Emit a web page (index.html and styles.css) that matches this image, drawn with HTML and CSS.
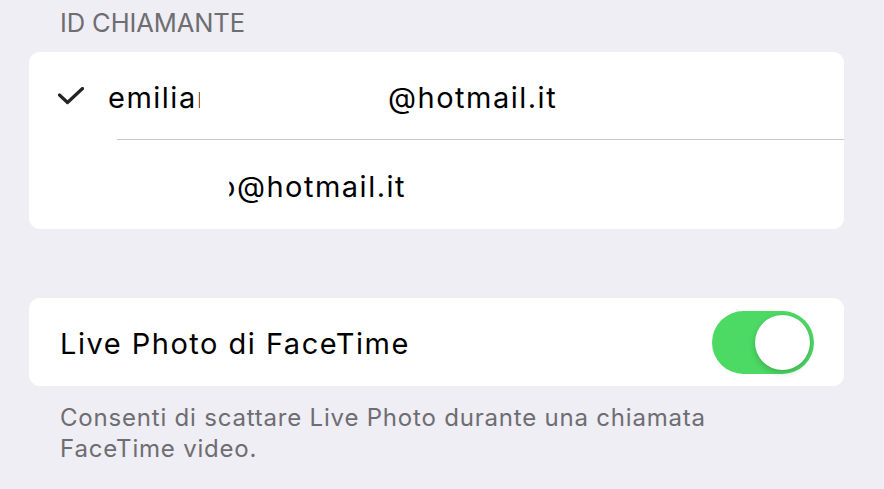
FILE: index.html
```html
<!DOCTYPE html>
<html lang="it">
<head>
<meta charset="utf-8">
<link rel="stylesheet" href="styles.css">
</head>
<body>
<main class="page">
  <div class="section-header">ID CHIAMANTE</div>
  <section class="card">
    <div class="row">
      <svg class="check" width="26" height="18" viewBox="0 0 26 18" aria-hidden="true">
        <path d="M1.5 8 L9.5 15.5 L24.5 1.5" fill="none" stroke="#242424" stroke-width="3.2" stroke-linecap="round" stroke-linejoin="round"/>
      </svg>
      <span class="label">
        <span class="lead">emilia<span class="cut-right">n</span></span><span class="tail">@hotmail.it</span>
      </span>
    </div>
    <div class="row row-second">
      <span class="label">
        <span class="spacer"></span><span class="cut-left">o</span><span>@hotmail.it</span>
      </span>
    </div>
  </section>

  <section class="card card-toggle">
    <div class="row row-toggle">
      <span class="label">Live Photo di FaceTime</span>
      <span class="switch"><span class="knob"></span></span>
    </div>
  </section>
  <p class="footer">Consenti di scattare Live Photo durante una chiamata<br>FaceTime video.</p>
</main>
</body>
</html>
```

FILE: styles.css
```css
html, body {
  margin: 0;
  padding: 0;
  background: #efeef4;
}
body {
  font-family: Inter, "Liberation Sans", Arial, sans-serif;
  color: #000;
  overflow: hidden;
}
.page {
  margin: 0 40px 0 29px;
  padding-top: 8px;
}
.section-header {
  padding-left: 31px;
  font-size: 25.5px;
  line-height: 30px;
  color: #6d6d72;
  letter-spacing: -0.1px;
  height: 44px;
}
.card {
  background: #fff;
  border-radius: 11px;
  overflow: hidden;
}
.row {
  position: relative;
  height: 87px;
  display: flex;
  align-items: center;
  font-size: 29px;
  letter-spacing: 1.5px;
}
.row-second {
  height: 89px;
  border-top: 1px solid #c9c9cc;
  margin-left: 88px;
}
.check {
  margin-left: 29px;
  margin-right: 24px;
  flex: none;
}
.label {
  white-space: nowrap;
  padding-top: 4px;
}
.lead {
  display: inline-block;
  width: 280px;
}
.cut-right {
  display: inline-block;
  clip-path: inset(0 84% 0 0);
}
.spacer {
  display: inline-block;
  width: 101px;
}
.cut-left {
  display: inline-block;
  clip-path: inset(0 0 0 60%);
}
.card-toggle {
  margin-top: 69px;
}
.row-toggle {
  height: 88px;
  padding: 0 30px 0 31px;
  justify-content: space-between;
}
.row-toggle .label {
  padding-top: 2px;
}
.switch {
  width: 102px;
  height: 63px;
  border-radius: 32px;
  background: #4cd964;
  display: flex;
  align-items: center;
  justify-content: flex-end;
  padding-right: 4px;
  box-sizing: border-box;
}
.knob {
  width: 55px;
  height: 55px;
  border-radius: 50%;
  background: #fff;
  box-shadow: 0 3px 6px rgba(0,0,0,0.18), 0 0 1px rgba(0,0,0,0.15);
}
.footer {
  margin: 16px 0 0 31px;
  font-size: 24px;
  line-height: 31px;
  letter-spacing: 0.8px;
  color: #6d6d72;
}
```
